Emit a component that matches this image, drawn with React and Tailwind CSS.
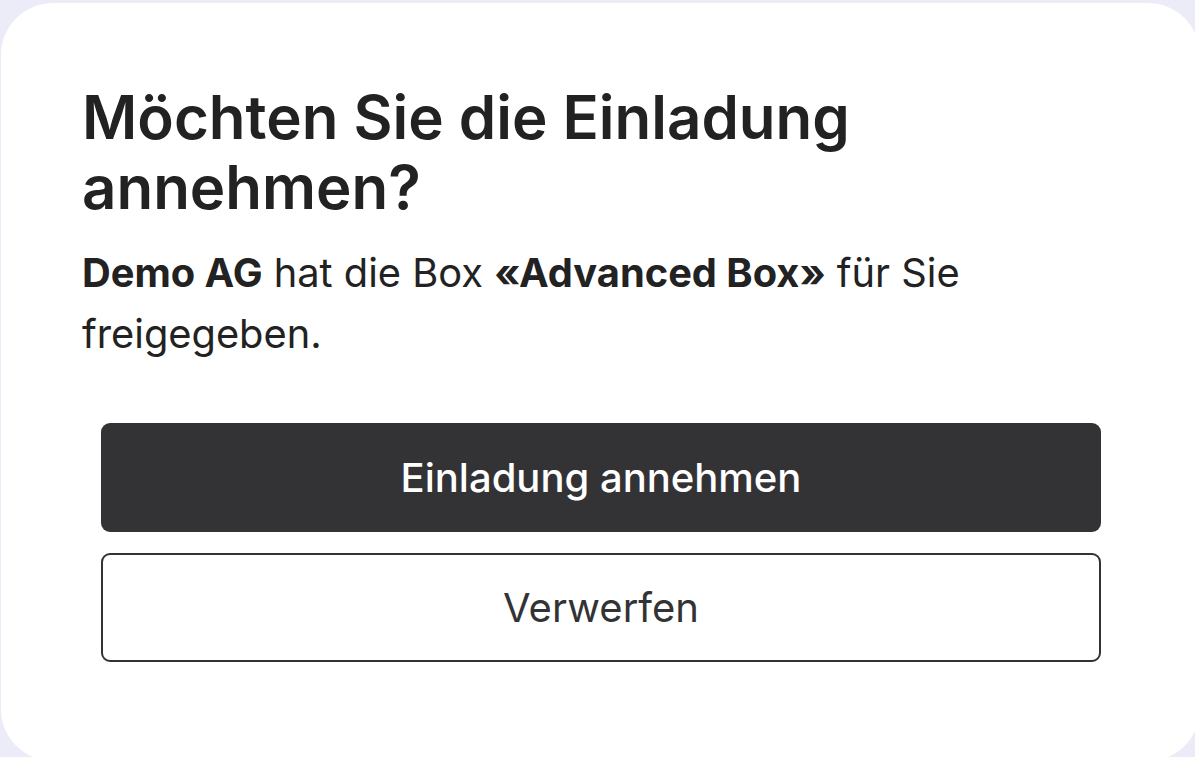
export default function App() {
  return (
    <div className="w-[1195px] h-[757px] overflow-hidden bg-[#ebecf7]" style={{ fontFamily: 'Inter, "Noto Sans", sans-serif' }}>
      <div className="ml-px mt-[3px] w-[1199px] h-[758px] rounded-[52px] bg-white px-[81px] pt-[79px] text-[#222222]">
        <h1 className="text-[60px] leading-[70px] font-semibold">
          Möchten Sie die Einladung
          <br />
          annehmen?
        </h1>
        <p className="mt-[20px] text-[39.8px] leading-[61px] w-[1000px]">
          <span className="font-bold">Demo AG</span> hat die Box <span className="font-bold">«Advanced Box»</span> für Sie freigegeben.
        </p>
        <div className="mt-[59px] mx-[19px] w-[1000px] flex flex-col gap-[21px]">
          <button className="h-[109px] w-full rounded-[9px] bg-[#333335] text-white text-[40px] font-medium">
            Einladung annehmen
          </button>
          <button className="h-[109px] w-full rounded-[9px] border-2 border-[#333335] bg-white text-[#333335] text-[40px]">
            Verwerfen
          </button>
        </div>
      </div>
    </div>
  );
}
